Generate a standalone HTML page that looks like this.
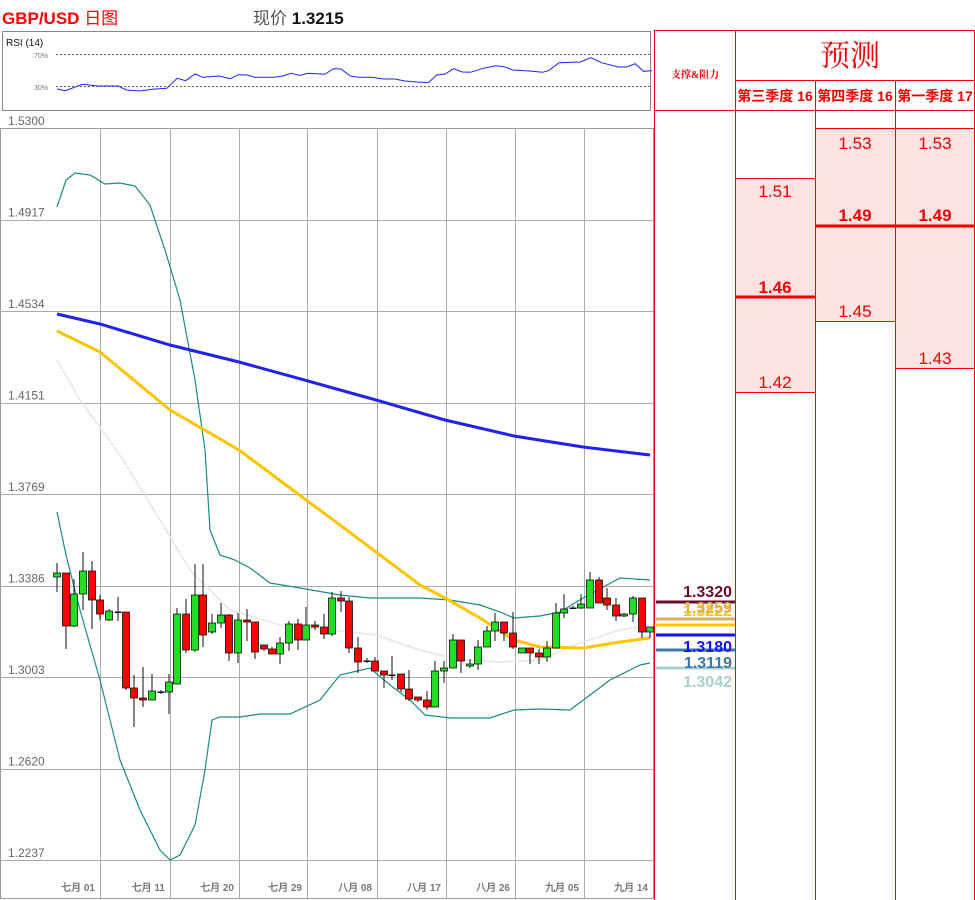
<!DOCTYPE html>
<html><head><meta charset="utf-8">
<style>
html,body{margin:0;padding:0;background:#fff;width:975px;height:900px;overflow:hidden;font-family:"Liberation Sans","Noto Sans CJK SC",sans-serif}
.abs{position:absolute}
</style></head><body>
<div class="abs" style="left:2px;top:4px;font-size:17px;font-weight:bold;color:#f00;">GBP/USD <span style="font-weight:normal">日图</span></div>
<div class="abs" style="left:253px;top:4px;font-size:17px;color:#555;">现价 <b style="color:#111">1.3215</b></div>

<svg class="abs" style="left:0;top:0" width="975" height="900" id="s">
<!-- RSI box -->
<rect x="2.5" y="31.5" width="648" height="79" fill="#fff" stroke="#888"/>
<text x="6" y="46" font-size="10" fill="#111" font-family="Liberation Sans">RSI (14)</text>
<text x="34" y="58" font-size="7" fill="#777" font-family="Liberation Sans">70%</text>
<text x="34" y="90" font-size="7" fill="#777" font-family="Liberation Sans">30%</text>
<line x1="56" y1="54.5" x2="650" y2="54.5" stroke="#666" stroke-dasharray="2,2"/>
<line x1="56" y1="86.5" x2="650" y2="86.5" stroke="#666" stroke-dasharray="2,2"/>
<polyline id="rsi" fill="none" stroke="#2222ee" stroke-width="1"/>
<!-- main chart frame -->
<rect x="0.5" y="128.5" width="653" height="770" fill="#fff" stroke="#999"/>
<g id="grid" stroke="#aaa" stroke-width="1"></g>
<g id="labels" font-family="Liberation Sans" fill="#666"></g>
<polyline fill="none" stroke="#e6e6e6" stroke-width="1.5" points="57,360 80,400 120,455 160,520 190,570 230,610 280,625 330,630 376,635 420,650 460,660 500,662 540,660 580,643 620,630 650,625"/>
<polyline fill="none" stroke="#1a8a8a" stroke-width="1.2" points="57,207 66,180 75,173 90,175 105,184 120,183 135,186 150,205 165,250 180,300 195,380 205,450 210,530 220,555 235,560 250,568 270,583 300,588 340,595 370,598 420,598 450,600 480,605 500,612 514,618 540,616 560,612 583,598 620,578 650,580"/>
<polyline fill="none" stroke="#1a8a8a" stroke-width="1.2" points="57,512 66,555 80,610 100,680 120,760 140,810 160,850 170,860 180,855 195,825 205,770 212,720 220,717 240,717 260,714 290,714 320,700 340,675 370,668 390,685 410,700 425,715 450,718 490,718 514,710 540,709 570,710 590,695 610,680 640,665 650,663"/>
<polyline fill="none" stroke="#2222ee" stroke-width="3" points="57,314 100,324 170,345 239,362 308,381 376,400 445,420 514,436 583,447 650,455"/>
<polyline fill="none" stroke="#ffc400" stroke-width="3" points="57,331 100,352 170,410 239,450 290,488 340,525 376,552 420,585 445,598 480,618 514,640 540,647 583,648 620,642 650,638"/>
<g id="candles"></g>
<!-- right table -->
<rect x="735" y="178" width="80" height="214" fill="#ffe2e2"/>
<rect x="815" y="128" width="80" height="193" fill="#ffe2e2"/>
<rect x="895" y="128" width="80" height="240" fill="#ffe2e2"/>
<g stroke="#e00" stroke-width="1" fill="none">
<line x1="654.5" y1="30" x2="654.5" y2="900"/>
<line x1="735.5" y1="30" x2="735.5" y2="900"/>
<line x1="815.5" y1="80" x2="815.5" y2="900"/>
<line x1="895.5" y1="80" x2="895.5" y2="900"/>
<line x1="974.5" y1="30" x2="974.5" y2="900"/>
<line x1="654" y1="30.5" x2="975" y2="30.5"/>
<line x1="735" y1="80.5" x2="975" y2="80.5"/>
<line x1="654" y1="110.5" x2="975" y2="110.5"/>
<line x1="815" y1="128.5" x2="975" y2="128.5"/>
<line x1="735" y1="178.5" x2="815" y2="178.5"/>
<line x1="735" y1="392.5" x2="815" y2="392.5"/>
<line x1="815" y1="321.5" x2="895" y2="321.5"/>
<line x1="895" y1="368.5" x2="975" y2="368.5"/>
</g>
<line x1="735" y1="297" x2="815" y2="297" stroke="#e00" stroke-width="3"/>
<line x1="815" y1="226" x2="975" y2="226" stroke="#e00" stroke-width="3"/>
<g font-family="Liberation Serif,Noto Serif CJK SC,serif" fill="#e00" text-anchor="middle">
<text x="695" y="78" font-size="10" font-weight="bold">支撑&amp;阻力</text>
<text x="850" y="66" font-size="30">预测</text>
</g>
<g font-family="Liberation Sans,Noto Sans CJK SC,sans-serif" fill="#e00" text-anchor="middle" font-size="14" font-weight="bold">
<text x="775" y="101">第三季度 16</text>
<text x="855" y="101">第四季度 16</text>
<text x="935" y="101">第一季度 17</text>
</g>
<g font-family="Liberation Sans,sans-serif" fill="#e00" text-anchor="middle" font-size="17">
<text x="775" y="197">1.51</text>
<text x="775" y="293" font-weight="bold">1.46</text>
<text x="775" y="388">1.42</text>
<text x="855" y="149">1.53</text>
<text x="855" y="221" font-weight="bold">1.49</text>
<text x="855" y="317">1.45</text>
<text x="935" y="149">1.53</text>
<text x="935" y="221" font-weight="bold">1.49</text>
<text x="935" y="364">1.43</text>
</g>
<!-- levels -->
<g stroke-width="3">
<line x1="656" y1="602" x2="735" y2="602" stroke="#6a0a30"/>
<line x1="656" y1="619" x2="735" y2="619" stroke="#d8b060"/>
<line x1="656" y1="625" x2="735" y2="625" stroke="#ffc400"/>
<line x1="656" y1="635" x2="735" y2="635" stroke="#1010ff"/>
<line x1="656" y1="650" x2="735" y2="650" stroke="#3a7aa8"/>
<line x1="656" y1="668" x2="735" y2="668" stroke="#a8d0d0"/>
</g>
<g font-family="Liberation Sans,sans-serif" font-size="16" font-weight="bold" text-anchor="end">
<text x="732" y="597" fill="#6a0a30">1.3320</text>
<text x="732" y="616" fill="#ffc400">1.3222</text>
<text x="732" y="613" fill="#d8b060">1.3259</text>
<text x="732" y="652" fill="#1010ff">1.3180</text>
<text x="732" y="668" fill="#3a7aa8">1.3119</text>
<text x="732" y="687" fill="#a8d0d0">1.3042</text>
</g>
</svg>
<script>
var NS="http://www.w3.org/2000/svg";
function el(t,a,p){var e=document.createElementNS(NS,t);for(var k in a)e.setAttribute(k,a[k]);p.appendChild(e);return e;}
var g=document.getElementById('grid');
var prices=["1.5300","1.4917","1.4534","1.4151","1.3769","1.3386","1.3003","1.2620","1.2237"];
var lb=document.getElementById('labels');
for(var i=0;i<9;i++){var y=128+i*91.5;if(i>0)el('line',{x1:0,x2:653,y1:Math.round(y)+.5,y2:Math.round(y)+.5},g);
 var t=el('text',{x:8,y:y-3,'font-size':12},lb);t.textContent=prices[i];}
var vx=[100,170,239,307,377,446,515,584];
vx.forEach(function(x){el('line',{x1:x+.5,x2:x+.5,y1:128,y2:898},g);});
var dl=["七月 01","七月 11","七月 20","七月 29","八月 08","八月 17","八月 26","九月 05","九月 14"];
var dx=[96,166,235,303,373,442,511,580,649];
dl.forEach(function(s,i){var t=el('text',{x:dx[i]-1,y:891,'font-size':10,'font-weight':'bold','text-anchor':'end',fill:'#777'},lb);t.textContent=s;});
// rsi
var rz=[[135,267],[155,272],[195,253],[230,258],[280,258],[300,270],[330,273],[360,268],[395,265],[420,235],[440,242],[462,222],[480,232],[520,228],[545,236],[565,224],[585,225],[605,232],[650,232],[670,228],[690,220],[710,226],[730,220],[770,223],[790,206],[808,207],[830,228],[850,232],[880,232],[910,237],[935,237],[960,243],[980,245],[1015,248],[1035,225],[1055,222],[1075,206],[1095,216],[1115,217],[1145,205],[1175,197],[1195,200],[1215,210],[1255,213],[1285,217],[1300,212],[1325,188],[1375,186],[1400,173],[1425,188],[1465,201],[1485,201],[1505,191],[1525,214],[1545,212]];
document.getElementById('rsi').setAttribute('points',rz.map(function(p){return (p[0]*0.422).toFixed(1)+","+(p[1]/3).toFixed(1)}).join(" "));
// candles: x, open, close, high, low (y pixels)
var C=[[57,577,573,563,592],[66,573,626,573,649],[74,626,594,579,627],[83,594,571,552,610],[92,571,600,561,629],[100,600,614,595,620],[109,620,611,609,621],[118,612,612,597,621],[126,612,688,612,690],[134,688,698,675,727],[143,698,700,667,707],[152,700,691,674,700],[161,692,692,690,694],[169,692,682,674,714],[177,684,614,608,684],[186,614,650,599,653],[195,650,595,564,652],[203,595,635,564,647],[212,632,623,614,634],[221,623,615,603,628],[229,615,653,614,661],[238,653,620,613,663],[247,620,622,609,641],[255,622,652,622,659],[264,645,649,645,651],[272,649,654,647,654],[280,654,643,637,664],[289,643,624,621,651],[298,624,640,619,650],[306,640,625,607,640],[315,625,627,621,630],[324,627,634,614,639],[332,634,598,592,636],[341,598,601,591,612],[349,601,648,597,653],[358,648,662,637,673],[367,661,661,658,663],[375,661,671,657,671],[384,671,675,671,688],[392,675,675,656,680],[401,674,689,674,692],[409,689,699,670,701],[418,697,700,697,702],[427,700,707,691,710],[435,707,671,661,707],[444,671,668,661,683],[453,668,640,634,668],[461,640,661,640,673],[470,666,664,659,668],[478,664,647,640,670],[487,647,631,626,647],[495,631,622,613,641],[504,622,633,622,641],[513,633,647,612,649],[522,653,648,648,653],[530,648,653,648,664],[539,653,657,649,664],[547,657,648,641,662],[556,648,613,603,648],[564,613,609,594,618],[573,608,608,606,609],[581,608,604,594,609],[590,608,580,572,608],[599,580,603,577,603],[607,598,605,588,610],[616,605,616,598,621],[624,616,614,613,617],[633,614,598,596,622],[642,598,632,598,638],[650,632,627,627,638]];
var cg=document.getElementById('candles');
C.forEach(function(c){var x=c[0],o=c[1],cl=c[2],h=c[3],l=c[4];
 el('line',{x1:x,x2:x,y1:h,y2:l,stroke:'#111','stroke-width':1},cg);
 var top=Math.min(o,cl),bh=Math.max(Math.abs(o-cl),1.5);
 var up=cl<o; if(o==cl){el('rect',{x:x-3.5,y:top-.5,width:7,height:1.5,fill:'#111'},cg);return;}
 el('rect',{x:x-3.5,y:top,width:7,height:bh,fill:up?'#22dd22':'#f00',stroke:'#111','stroke-width':0.8},cg);});
</script>
</body></html>
